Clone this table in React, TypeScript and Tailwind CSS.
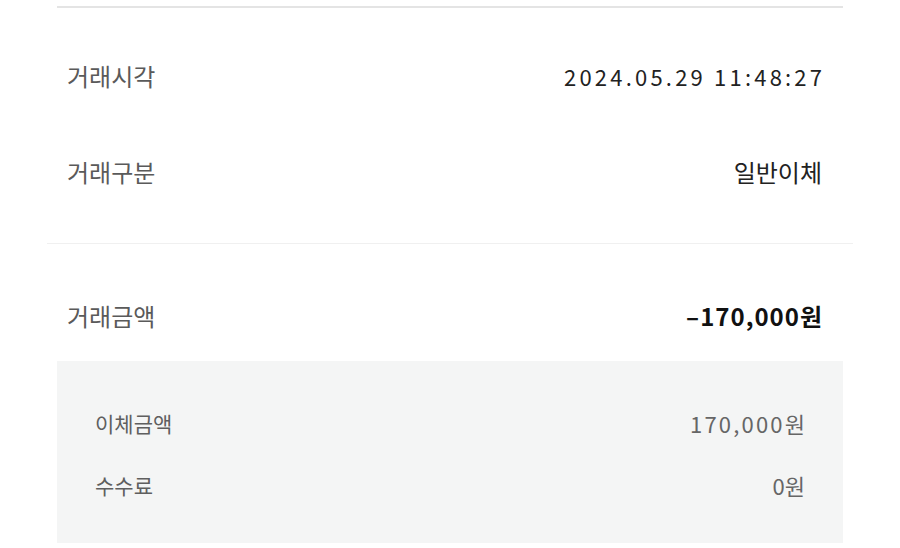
const font = {fontFamily: '"Noto Sans CJK KR", "Noto Sans", sans-serif'}

interface RowProps {
  label: string
  value: string
  strong?: boolean
  spacing?: string
}

const Row = ({label, value, strong, spacing}: RowProps) => (
  <div className="flex items-center justify-between h-[32px] pl-[10px] pr-[21px]">
    <span className="text-[24px] leading-[32px] text-[#5a5a5a]">{label}</span>
    <span
      className={`leading-[32px] ${strong ? 'font-bold text-[#111]' : 'text-[#222]'} ${spacing ?? 'text-[24px]'}`}
    >
      {value}
    </span>
  </div>
)

const SubRow = ({label, value, spacing}: RowProps) => (
  <div className="flex items-center justify-between h-[28px]">
    <span className="text-[21px] leading-[28px] text-[#5f5f5f]">{label}</span>
    <span className={`text-[22px] leading-[28px] text-[#666] ${spacing ?? ''}`}>{value}</span>
  </div>
)

export default function App() {
  return (
    <div className="w-[900px] h-[548px] bg-white overflow-hidden" style={font}>
      <div className="mx-[57px] mt-[6px] h-[2px] bg-[#e4e4e4]" />

      <div className="mx-[57px] mt-[52px] flex flex-col gap-[64px]">
        <Row label="거래시각" value="2024.05.29 11:48:27" spacing="text-[22px] tracking-[3.2px] -mr-[3.2px]" />
        <Row label="거래구분" value="일반이체" />
      </div>

      <div className="mx-[47px] mt-[55px] h-px bg-[#f0f0f0]" />

      <div className="mx-[57px] mt-[56px]">
        <Row label="거래금액" value="–170,000원" strong spacing="text-[24px] tracking-[1px] -mr-[1px]" />
      </div>

      <div className="mx-[57px] mt-[29px] h-[182px] bg-[#f4f5f5] px-[38px] pt-[48px] flex flex-col gap-[34px]">
        <SubRow label="이체금액" value="170,000원" spacing="tracking-[2.2px] -mr-[2.2px]" />
        <SubRow label="수수료" value="0원" />
      </div>
    </div>
  )
}
